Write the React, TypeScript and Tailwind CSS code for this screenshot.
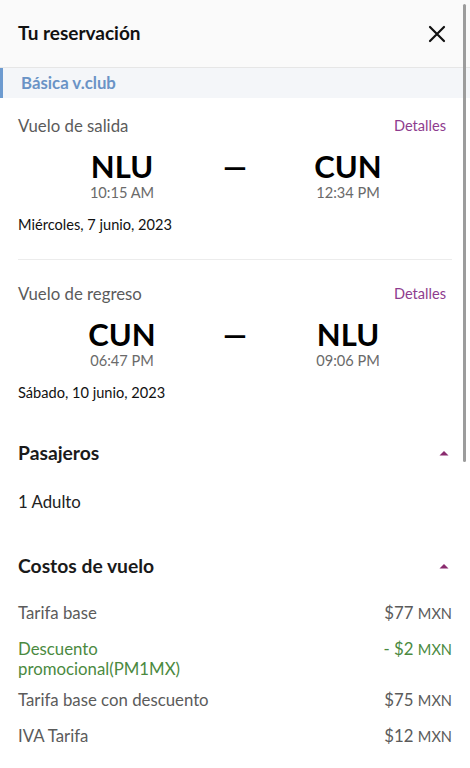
const font = { fontFamily: 'Lato, "Noto Sans", sans-serif' };

type Flight = {
  label: string;
  from: string;
  to: string;
  dep: string;
  arr: string;
  date: string;
};

const flights: Flight[] = [
  { label: 'Vuelo de salida', from: 'NLU', to: 'CUN', dep: '10:15 AM', arr: '12:34 PM', date: 'Miércoles, 7 junio, 2023' },
  { label: 'Vuelo de regreso', from: 'CUN', to: 'NLU', dep: '06:47 PM', arr: '09:06 PM', date: 'Sábado, 10 junio, 2023' },
];

function Caret() {
  return (
    <svg width="12" height="6" viewBox="0 0 12 6" className="shrink-0 mr-[2px]">
      <path d="M1.5 5.5 L6 1 L10.5 5.5 Z" fill="#8a2b6e" />
    </svg>
  );
}

function FlightBlock({ f, first }: { f: Flight; first: boolean }) {
  return (
    <div className={`${first ? 'pt-4 pb-6 border-b border-[#ececec]' : 'pt-[22px]'} ml-[18px] mr-[18px]`}>
      <div className="flex items-center justify-between h-6">
        <span className="text-[16.8px] text-[#5b5b5b]">{f.label}</span>
        <span className="text-[14.6px] text-[#8e3c8e] mr-[6px]">Detalles</span>
      </div>
      <div className="flex justify-center mt-[10px]">
        <div className="w-[120px] flex flex-col items-center">
          <span className="text-[31px] font-bold leading-[36px] text-black">{f.from}</span>
          <span className="text-[14.6px] leading-[18px] text-[#6a6a6a]">{f.dep}</span>
        </div>
        <div className="w-[106px] flex justify-center">
          <span className="text-[30px] font-bold leading-[36px] text-black">—</span>
        </div>
        <div className="w-[120px] flex flex-col items-center">
          <span className="text-[31px] font-bold leading-[36px] text-black">{f.to}</span>
          <span className="text-[14.6px] leading-[18px] text-[#6a6a6a]">{f.arr}</span>
        </div>
      </div>
      <div className="mt-[13px] text-[14.6px] leading-5 text-[#111]">{f.date}</div>
    </div>
  );
}

function Amount({ value, green }: { value: string; green?: boolean }) {
  return (
    <span className={`text-[16.8px] whitespace-nowrap ${green ? 'text-[#4b8a3f]' : 'text-[#5b5b5b]'}`}>
      {value} <span className="text-[14.6px]">MXN</span>
    </span>
  );
}

export default function App() {
  return (
    <div className="relative h-[768px] w-[470px] overflow-hidden bg-white" style={font}>
      <div className="h-[68px] bg-[#fafafa] border-b border-[#e6e6e6] shadow-[0_1px_2px_rgba(0,0,0,0.05)] flex items-center justify-between pl-[18px] pr-[24px]">
        <h1 className="text-[19px] font-bold text-[#111]">Tu reservación</h1>
        <svg width="18" height="18" viewBox="0 0 18 18">
          <path d="M2 2 L16 16 M16 2 L2 16" stroke="#111" strokeWidth="2.2" strokeLinecap="round" />
        </svg>
      </div>

      <div className="h-[30px] bg-[#f4f6f9] border-l-[3px] border-[#6d9bd0] flex items-center pl-[18px]">
        <span className="text-[16.8px] font-bold text-[#6a93c6]">Básica v.club</span>
      </div>

      {flights.map((f, i) => (
        <FlightBlock key={f.label} f={f} first={i === 0} />
      ))}

      <div className="mx-[18px] mt-9 flex items-center justify-between h-7">
        <h2 className="text-[19.3px] font-bold text-[#1a1a1a]">Pasajeros</h2>
        <Caret />
      </div>
      <div className="mx-[18px] mt-[23px] text-[16.8px] leading-6 text-[#222]">1 Adulto</div>

      <div className="mx-[18px] mt-[38px] flex items-center justify-between h-7">
        <h2 className="text-[19.3px] font-bold text-[#1a1a1a]">Costos de vuelo</h2>
        <Caret />
      </div>

      <div className="mx-[18px] mt-[21px] pb-5 border-b border-[#ececec] flex flex-col">
        <div className="flex justify-between leading-6">
          <span className="text-[16.8px] text-[#5b5b5b]">Tarifa base</span>
          <Amount value="$77" />
        </div>
        <div className="flex justify-between leading-5 mt-[13px]">
          <span className="text-[16.8px] text-[#4b8a3f] w-[200px]">Descuento promocional(PM1MX)</span>
          <Amount value="- $2" green />
        </div>
        <div className="flex justify-between leading-6 mt-[9px]">
          <span className="text-[16.8px] text-[#5b5b5b]">Tarifa base con descuento</span>
          <Amount value="$75" />
        </div>
        <div className="flex justify-between leading-6 mt-[11px]">
          <span className="text-[16.8px] text-[#5b5b5b]">IVA Tarifa</span>
          <Amount value="$12" />
        </div>
      </div>

      <div className="absolute right-[4px] top-[4px] w-[3px] h-[458px] rounded-full bg-[#9c9c9c]" />
    </div>
  );
}
